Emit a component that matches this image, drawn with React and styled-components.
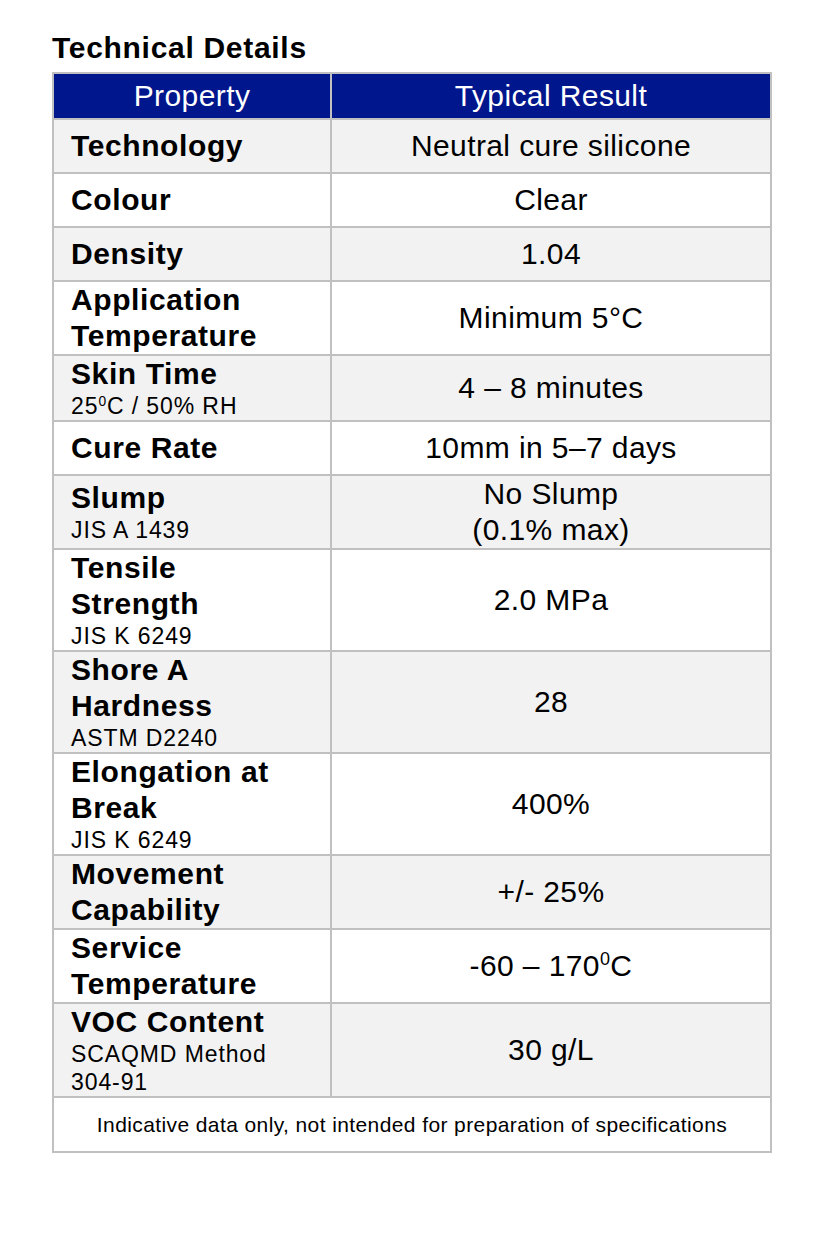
import React from "react";
import styled, { createGlobalStyle } from "styled-components";

const GlobalStyle = createGlobalStyle`
  body {
    margin: 0;
    background: #ffffff;
    font-family: "Liberation Sans", Arial, sans-serif;
    color: #000000;
  }
`;

const Page = styled.div`
  padding: 30px 60px 80px 52px;
`;

const Title = styled.h2`
  margin: 0 0 6px 0;
  font-size: 30px;
  line-height: 36px;
  font-weight: 700;
  letter-spacing: 0.7px;
`;

const Table = styled.table`
  width: 720px;
  border-collapse: collapse;
  table-layout: fixed;
`;

const HeadCell = styled.th`
  background: #00168c;
  color: #ffffff;
  font-weight: 400;
  font-size: 30px;
  line-height: 36px;
  letter-spacing: 0.4px;
  height: 44px;
  padding: 0;
  border: 2px solid #c0c0c0;
  text-align: center;
  vertical-align: middle;
`;

const Row = styled.tr`
  background: ${(p) => (p.$shaded ? "#f2f2f2" : "#ffffff")};
`;

const LabelCell = styled.td`
  border: 2px solid #c0c0c0;
  padding: 0 8px 0 17px;
  height: 52px;
  vertical-align: middle;
`;

const ValueCell = styled.td`
  border: 2px solid #c0c0c0;
  padding: 0 8px;
  height: 52px;
  text-align: center;
  vertical-align: middle;
  font-size: 30px;
  line-height: 36px;
  letter-spacing: 0.4px;
`;

const Label = styled.div`
  font-weight: 700;
  font-size: 30px;
  line-height: 36px;
  letter-spacing: 0.6px;
`;

const Note = styled.div`
  font-size: 23px;
  line-height: 28px;
  letter-spacing: 0.9px;
`;

const Sup = styled.span`
  font-size: 0.6em;
  vertical-align: 0.6em;
  line-height: 0;
`;

const FootCell = styled.td`
  border: 2px solid #c0c0c0;
  height: 53px;
  padding: 0;
  text-align: center;
  vertical-align: middle;
  font-size: 21px;
  letter-spacing: 0.4px;
`;

const rows = [
  { label: ["Technology"], value: ["Neutral cure silicone"] },
  { label: ["Colour"], value: ["Clear"] },
  { label: ["Density"], value: ["1.04"] },
  { label: ["Application", "Temperature"], value: ["Minimum 5°C"] },
  {
    label: ["Skin Time"],
    note: [
      <>
        25<Sup>0</Sup>C / 50% RH
      </>,
    ],
    value: ["4 – 8 minutes"],
  },
  { label: ["Cure Rate"], value: ["10mm in 5–7 days"] },
  { label: ["Slump"], note: ["JIS A 1439"], value: ["No Slump", "(0.1% max)"] },
  { label: ["Tensile", "Strength"], note: ["JIS K 6249"], value: ["2.0 MPa"] },
  { label: ["Shore A", "Hardness"], note: ["ASTM D2240"], value: ["28"] },
  { label: ["Elongation at", "Break"], note: ["JIS K 6249"], value: ["400%"] },
  { label: ["Movement", "Capability"], value: ["+/- 25%"] },
  {
    label: ["Service", "Temperature"],
    value: [
      <>
        -60 – 170<Sup>0</Sup>C
      </>,
    ],
  },
  { label: ["VOC Content"], note: ["SCAQMD Method", "304-91"], value: ["30 g/L"] },
];

export default function App() {
  return (
    <Page>
      <GlobalStyle />
      <Title>Technical Details</Title>
      <Table>
        <colgroup>
          <col style={{ width: "278px" }} />
          <col />
        </colgroup>
        <thead>
          <tr>
            <HeadCell>Property</HeadCell>
            <HeadCell>Typical Result</HeadCell>
          </tr>
        </thead>
        <tbody>
          {rows.map((r, i) => (
            <Row key={i} $shaded={i % 2 === 0}>
              <LabelCell>
                {r.label.map((l, j) => (
                  <Label key={j}>{l}</Label>
                ))}
                {(r.note || []).map((n, j) => (
                  <Note key={j}>{n}</Note>
                ))}
              </LabelCell>
              <ValueCell>
                {r.value.map((v, j) => (
                  <div key={j}>{v}</div>
                ))}
              </ValueCell>
            </Row>
          ))}
          <Row>
            <FootCell colSpan={2}>
              Indicative data only, not intended for preparation of specifications
            </FootCell>
          </Row>
        </tbody>
      </Table>
    </Page>
  );
}
